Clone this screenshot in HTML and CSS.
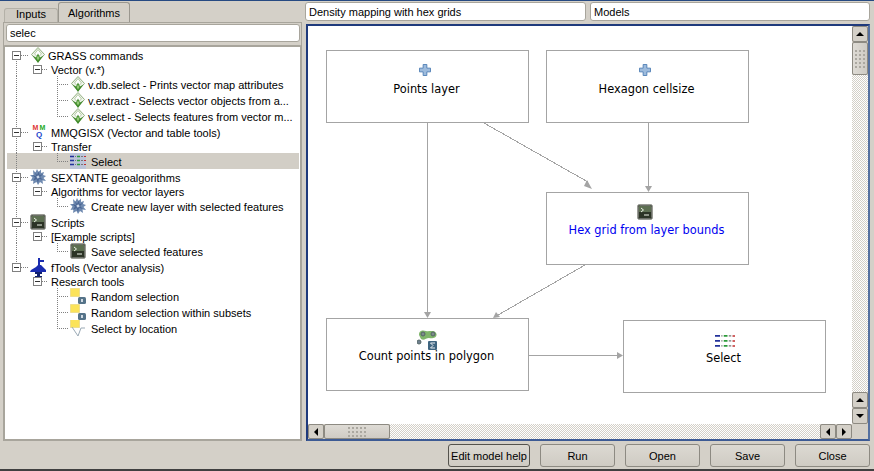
FILE: index.html
```html
<!DOCTYPE html>
<html lang="en">
<head>
  <meta charset="UTF-8" />
  <title>Processing modeler</title>
  <link rel="stylesheet" href="styles.css">
</head>
<body>
  <svg class="sprite" width="0" height="0">
    <symbol id="i-grass" viewBox="0 0 16 16">
      <path d="M8 .5 14.500 7.500 8 14.500 1.500 7.500Z" fill="#f0f5ec" stroke="#93b081"/>
      <path d="M8 2.500 11.500 7 8 10 4.500 7Z" fill="#fff" stroke="#b6cca6"/>
      <path d="M2.500 8.500 8 16 13.500 8.500 10 10.500 8 6.500 6 10.500Z" fill="#3f8a2a"/>
      <path d="M6.500 11 8 8.500 9.500 11 8 13.500Z" fill="#96cc78"/>
    </symbol>
    <symbol id="i-sextante" viewBox="0 0 16 16">
      <path d="M3 1 5.500 3.500 7 0 8.500 3 11 .5 11 4 14 3 13 6 16 7 13.500 9 16 12 12.500 11.500 13 15 10 13 8 16 6.500 13 3 15 3.500 11.500 .5 12 2.500 8.500 0 6 3.500 6Z" fill="#6f8ab0"/>
      <path d="M5 3 7 6 9 2 9.500 6 13 5 10 8 13 11 9 10 8 14 6.500 10 3 12 5 8.500 2 6 6 7Z" fill="#4a6694"/>
      <path d="M6.500 7 9 6.500 9.500 9 7 9.500Z" fill="#c9d6e8"/>
    </symbol>
    <symbol id="i-term" viewBox="0 0 16 16">
      <rect x=".5" y=".5" width="15" height="15" rx="2" fill="#2c3426" stroke="#9a9c95"/>
      <rect x="1.500" y="1.500" width="13" height="13" rx="1" fill="none" stroke="#6c6f68"/>
      <rect x="2" y="2" width="12" height="6" fill="#5d6f52"/>
      <path d="M4 4 6.500 6 4 8" fill="none" stroke="#eef3e8"/>
      <path d="M7 11H12" stroke="#eef3e8"/>
    </symbol>
    <symbol id="i-ftools" viewBox="0 0 16 19">
      <path d="M8 0H10V2H14V4H10V7H11L16 12V14H0L1 12 6 9 8 7Z" fill="#1a2cb0"/>
      <path d="M5 14H12V16H10V18H12V19H5V18H7V16H5Z" fill="#10206f"/>
    </symbol>
    <symbol id="i-random" viewBox="0 0 16 16">
      <rect x=".5" y=".5" width="9" height="8" fill="#fbe35a" stroke="#e0cd70" stroke-dasharray="1 1"/>
      <rect x="8" y="9" width="8" height="7" rx="1.500" fill="#557389"/>
      <rect x="11" y="11" width="2" height="3" fill="#cfd9e2"/>
    </symbol>
    <symbol id="i-location" viewBox="0 0 16 16">
      <rect x=".5" y="-.5" width="9" height="8" fill="#fbe35a" stroke="#e0cd70" stroke-dasharray="1 1"/>
      <path d="M2 7 8 16 11 8H15" fill="none" stroke="#9aa9b5"/>
    </symbol>
    <symbol id="i-select" viewBox="0 0 16 12">
      <path d="M0 1.500H4M0 5.500H4M0 9.500H4" stroke="#23329b" stroke-width="1.500"/>
      <path d="M7 1.500H10M7 5.500H10M7 9.500H10" stroke="#2c9a3a" stroke-width="1.500"/>
      <path d="M5 1.500H6M5 5.500H6M5 9.500H6M11 1.500H13M11 5.500H13M11 9.500H13" stroke="#777"/>
      <path d="M14 1.500H16M14 5.500H16M14 9.500H16" stroke="#c03030" stroke-width="1.200"/>
    </symbol>
    <symbol id="i-plus" viewBox="0 0 13 13">
      <path d="M4.500 .5H8.500V4.500H12.500V8.500H8.500V12.500H4.500V8.500H.5V4.500H4.500Z" fill="#9dbbdc" stroke="#4f7fb5"/>
    </symbol>
    <symbol id="i-count" viewBox="0 0 20 20">
      <path d="M2 5C2 0 6 0 9 1 12 2 18 -1 19.500 4 20 8 15 9 12 8 9 8 7 11 4 9Z" fill="#7fb56a"/>
      <circle cx="6" cy="4" r="2" fill="#7d8c8c" stroke="#566"/>
      <circle cx="16" cy="4" r="2" fill="#7d8c8c" stroke="#566"/>
      <circle cx="2" cy="12" r="2" fill="#6f8090" stroke="#566"/>
      <rect x="11" y="11" width="9" height="9" rx="1" fill="#3f6580"/>
      <path d="M18 13H13.500L16 15.500 13.500 18H18" fill="none" stroke="#e8eef2"/>
    </symbol>
  </svg>

  <div class="window">
    <div class="sidebar">
      <div class="tabs">
        <div class="tab">Inputs</div>
        <div class="tab active">Algorithms</div>
      </div>
      <div class="tab-page">
        <input class="field search" type="text" value="selec" />
        <div class="tree">
          <div class="row trunk-down"><i class="box"></i><i class="stub"></i><svg class="ic"><use href="#i-grass"/></svg><span class="t">GRASS commands</span></div>
          <div class="row short trunk"><i class="box sub"></i><i class="stub small"></i><span class="t">Vector (v.*)</span></div>
          <div class="row trunk"><i class="tick"></i><svg class="ic"><use href="#i-grass"/></svg><span class="t">v.db.select - Prints vector map attributes</span></div>
          <div class="row trunk"><i class="tick"></i><svg class="ic"><use href="#i-grass"/></svg><span class="t">v.extract - Selects vector objects from a...</span></div>
          <div class="row trunk"><i class="tick last"></i><svg class="ic"><use href="#i-grass"/></svg><span class="t">v.select - Selects features from vector m...</span></div>
          <div class="row trunk"><i class="box"></i><i class="stub"></i><span class="ic mmq"><b class="m1">M</b><b class="m2">M</b><b class="q">Q</b></span><span class="t wide">MMQGISX (Vector and table tools)</span></div>
          <div class="row short trunk"><i class="box sub"></i><i class="stub small"></i><span class="t">Transfer</span></div>
          <div class="row trunk selected"><i class="tick last"></i><svg class="ic ic-picked"><use href="#i-select"/></svg><span class="t wide">Select</span></div>
          <div class="row trunk"><i class="box"></i><i class="stub"></i><svg class="ic"><use href="#i-sextante"/></svg><span class="t wide">SEXTANTE geoalgorithms</span></div>
          <div class="row short trunk"><i class="box sub"></i><i class="stub small"></i><span class="t">Algorithms for vector layers</span></div>
          <div class="row trunk"><i class="tick last"></i><svg class="ic"><use href="#i-sextante"/></svg><span class="t wide">Create new layer with selected features</span></div>
          <div class="row trunk"><i class="box"></i><i class="stub"></i><svg class="ic"><use href="#i-term"/></svg><span class="t wide">Scripts</span></div>
          <div class="row short trunk"><i class="box sub"></i><i class="stub small"></i><span class="t">[Example scripts]</span></div>
          <div class="row trunk"><i class="tick last"></i><svg class="ic"><use href="#i-term"/></svg><span class="t wide">Save selected features</span></div>
          <div class="row trunk-up"><i class="box"></i><i class="stub"></i><svg class="ic ic-ftools"><use href="#i-ftools"/></svg><span class="t wide">fTools (Vector analysis)</span></div>
          <div class="row short"><i class="box sub"></i><i class="stub small"></i><span class="t">Research tools</span></div>
          <div class="row"><i class="tick"></i><svg class="ic"><use href="#i-random"/></svg><span class="t wide">Random selection</span></div>
          <div class="row"><i class="tick"></i><svg class="ic"><use href="#i-random"/></svg><span class="t wide">Random selection within subsets</span></div>
          <div class="row"><i class="tick last"></i><svg class="ic"><use href="#i-location"/></svg><span class="t wide">Select by location</span></div>
        </div>
      </div>
    </div>

    <div class="main">
      <div class="names">
        <input class="field name" type="text" value="Density mapping with hex grids" />
        <input class="field group" type="text" value="Models" />
      </div>
      <div class="view">
        <div class="canvas">
          <svg class="wires" width="544" height="398">
            <g stroke="#a4a4a4" fill="none" shape-rendering="crispEdges">
              <path d="M119.500 97V288"/>
              <path d="M176 97 280 156"/>
              <path d="M340.500 97V162"/>
              <path d="M277 239 190 289"/>
              <path d="M220 329.500H310"/>
            </g>
            <g fill="#a4a4a4">
              <path d="M116 286H123L119.500 292Z"/>
              <path d="M284 163 276 160 279 154Z"/>
              <path d="M337 160H344L340.500 166Z"/>
              <path d="M185 292 188 286 192 291Z"/>
              <path d="M315 329.500 309 326V333Z"/>
            </g>
          </svg>
          <div class="node n-points"><svg class="nic plus"><use href="#i-plus"/></svg><span>Points layer</span></div>
          <div class="node n-hex"><svg class="nic plus"><use href="#i-plus"/></svg><span>Hexagon cellsize</span></div>
          <div class="node n-grid script"><svg class="nic"><use href="#i-term"/></svg><span>Hex grid from layer bounds</span></div>
          <div class="node n-count"><svg class="nic big"><use href="#i-count"/></svg><span>Count points in polygon</span></div>
          <div class="node n-select"><svg class="nic sel"><use href="#i-select"/></svg><span>Select</span></div>
        </div>
        <div class="sb-v">
          <div class="arrow"><i class="up"></i></div>
          <div class="thumb grip"></div>
          <div class="track"></div>
          <div class="arrow"><i class="up"></i></div>
          <div class="arrow"><i class="down"></i></div>
        </div>
        <div class="sb-h">
          <div class="arrow"><i class="left"></i></div>
          <div class="thumb grip"></div>
          <div class="track"></div>
          <div class="arrow"><i class="left"></i></div>
          <div class="arrow"><i class="right"></i></div>
        </div>
      </div>
    </div>

    <div class="buttons">
      <button class="btn help">Edit model help</button>
      <button class="btn">Run</button>
      <button class="btn">Open</button>
      <button class="btn">Save</button>
      <button class="btn">Close</button>
    </div>
  </div>
</body>
</html>
```

FILE: styles.css
```css
* {
  box-sizing: border-box;
}
html, body {
  margin: 0;
  height: 100%;
  overflow: hidden;
}
body {
  font-family: "Liberation Sans", Arial, sans-serif;
  font-size: 11px;
  color: #000;
  background: #d4d0c8;
}
.sprite {
  position: absolute;
}
.window {
  width: 874px;
  height: 471px;
  display: grid;
  grid-template-columns: 303px 1fr;
  grid-template-rows: 1fr 28px;
  border-top: 1px solid #264a82;
  border-bottom: 2px solid #404040;
  padding-left: 1px;
}

/* left panel */
.sidebar {
  padding: 1px 0 0 2px;
  display: flex;
  flex-direction: column;
  min-height: 0;
}
.tabs {
  display: flex;
  align-items: flex-end;
  height: 20px;
  padding-left: 1px;
}
.tab {
  height: 14px;
  width: 54px;
  text-align: center;
  line-height: 11px;
  border: 1px solid #b4b1a8;
  border-bottom: 0;
  border-radius: 3px 3px 0 0;
  background: #cfcbc3;
}
.tab.active {
  height: 20px;
  width: 72px;
  line-height: 20px;
  background: #d4d0c8;
  border-color: #9a978f;
}
.tab-page {
  flex: 1;
  min-height: 0;
  border: 1px solid #a8a59c;
  padding: 1px 0 0 2px;
  display: flex;
  flex-direction: column;
  width: 299px;
}
.field {
  display: block;
  height: 18px;
  border: 1px solid #a8a59c;
  border-radius: 3px;
  background: #fff;
  padding: 0 3px;
  font: 11px "Liberation Sans", Arial, sans-serif;
  color: #000;
  outline: 0;
}
.search {
  width: 294px;
  flex: none;
}
.tree {
  flex: 1;
  margin: 3px -1px -1px -3px;
  padding: 0 1px 0 2px;
  background: #fff;
  border: 2px solid #a8a59c;
  border-radius: 2px;
  overflow: hidden;
}
.row {
  display: flex;
  align-items: center;
  height: 16px;
  white-space: nowrap;
  --dots: repeating-linear-gradient(#808080 0 1px, transparent 1px 2px);
  background-repeat: no-repeat;
}
.row.short {
  height: 13px;
}
.trunk {
  background-image: var(--dots);
  background-size: 1px 100%;
  background-position: 9px 0;
}
.trunk-down {
  background-image: var(--dots);
  background-size: 1px 50%;
  background-position: 9px 100%;
}
.trunk-up {
  background-image: var(--dots);
  background-size: 1px 50%;
  background-position: 9px 0;
}
.selected {
  background-color: #d2cec6;
}
.box {
  flex: none;
  width: 9px;
  height: 9px;
  margin-left: 5px;
  border: 1px solid #808080;
  background: linear-gradient(#333, #333) center / 5px 1px no-repeat #fff;
}
.box.sub {
  margin-left: 26px;
}
.stub {
  flex: none;
  width: 7px;
  height: 1px;
  margin-right: 2px;
  background: repeating-linear-gradient(90deg, #808080 0 1px, transparent 1px 2px);
}
.stub.small {
  width: 5px;
}
.tick {
  flex: none;
  align-self: stretch;
  width: 11px;
  margin-left: 50px;
  margin-right: 2px;
  background:
    repeating-linear-gradient(#808080 0 1px, transparent 1px 2px) 0 0 / 1px 100% no-repeat,
    repeating-linear-gradient(90deg, #808080 0 1px, transparent 1px 2px) 0 50% / 100% 1px no-repeat;
}
.tick.last {
  background:
    repeating-linear-gradient(#808080 0 1px, transparent 1px 2px) 0 0 / 1px 50% no-repeat,
    repeating-linear-gradient(90deg, #808080 0 1px, transparent 1px 2px) 0 50% / 100% 1px no-repeat;
}
.ic {
  flex: none;
  width: 16px;
  height: 16px;
  overflow: visible;
}
.ic-ftools {
  height: 19px;
}
.ic-picked {
  background: #bcc4d8;
}
.t {
  margin-left: 2px;
  margin-top: 2px;
}
.short .t {
  margin-top: 0;
}
.t.wide {
  margin-left: 5px;
}
.mmq {
  display: grid;
  grid-template-columns: 7px 7px;
  grid-template-rows: 7px 7px;
  justify-items: center;
  font-size: 7px;
  line-height: 7px;
  padding-left: 2px;
}
.m1 { color: #d33; }
.m2 { color: #2a2; }
.q {
  color: #24c;
  grid-column: 1 / 3;
  font-size: 8px;
}

/* right panel */
.main {
  display: flex;
  flex-direction: column;
  min-height: 0;
  padding: 1px 4px 0 1px;
}
.names {
  display: flex;
  gap: 4px;
  height: 19px;
}
.name {
  width: 281px;
  height: 19px;
}
.group {
  flex: 1;
  min-width: 0;
  height: 19px;
}
.view {
  flex: 1;
  min-height: 0;
  margin: 3px 0 0 1px;
  border: 2px solid #1f3a7c;
  border-right-color: #5570a0;
  border-bottom-color: #3c5a94;
  background: #d4d0c8;
  display: grid;
  grid-template-columns: 1fr 16px;
  grid-template-rows: 1fr 15px;
}
.canvas {
  position: relative;
  background: #fff;
  overflow: hidden;
  min-width: 0;
}
.wires {
  position: absolute;
  left: 0;
  top: 0;
}
.node {
  position: absolute;
  width: 203px;
  height: 73px;
  padding-right: 2px;
  background: #fff;
  border: 1px solid #a4a4a4;
  display: flex;
  flex-direction: column;
  align-items: center;
  font-family: "DejaVu Sans", sans-serif;
  font-size: 11.4px;
  line-height: 14px;
}
.node.script {
  color: #0000f0;
}
.nic {
  width: 16px;
  height: 16px;
  margin: 11px 3px 3px 0;
  flex: none;
}
.nic.plus {
  width: 12px;
  height: 12px;
  margin: 13px 3px 6px 0;
}
.nic.big {
  width: 20px;
  height: 20px;
  margin: 11px 0 -1px;
}
.nic.sel {
  width: 20px;
  height: 15px;
  margin: 13px 0 2px 2px;
}
.n-points { left: 18px; top: 24px; }
.n-hex { left: 238px; top: 24px; }
.n-grid { left: 238px; top: 166px; }
.n-count { left: 18px; top: 292px; }
.n-select { left: 315px; top: 294px; }

.sb-v, .sb-h {
  display: flex;
  background: #d4d0c8;
}
.sb-v {
  flex-direction: column;
}
.arrow {
  flex: none;
  width: 16px;
  height: 16px;
  border: 1px solid #8d8a82;
  border-radius: 2px;
  background: #d4d0c8;
  display: flex;
  align-items: center;
  justify-content: center;
}
.sb-h .arrow {
  height: 15px;
}
.thumb {
  flex: none;
  border: 1px solid #8d8a82;
  border-radius: 2px;
  background: linear-gradient(90deg, #dedbd5, #cfcbc4);
  display: flex;
  align-items: center;
  justify-content: center;
}
.grip::after {
  content: "";
  background-image: radial-gradient(#aaa79f 0.7px, transparent 1px);
  background-size: 4px 4px;
}
.sb-v .thumb {
  height: 33px;
}
.sb-v .grip::after {
  width: 12px;
  height: 20px;
}
.sb-h .thumb {
  width: 66px;
  background: linear-gradient(#dedbd5, #cfcbc4);
}
.sb-h .grip::after {
  width: 20px;
  height: 12px;
}
.track {
  flex: 1;
  background: repeating-conic-gradient(#d4d0c8 0 25%, #fff 0 50%) 0 0 / 2px 2px;
}
.up, .down, .left, .right {
  display: block;
  width: 0;
  height: 0;
  border: 4px solid transparent;
}
.up {
  border-bottom: 4px solid #000;
  border-top: 0;
}
.down {
  border-top: 4px solid #000;
  border-bottom: 0;
}
.left {
  border-right: 4px solid #000;
  border-left: 0;
}
.right {
  border-left: 4px solid #000;
  border-right: 0;
}

/* bottom buttons */
.buttons {
  grid-column: 1 / 3;
  display: flex;
  justify-content: flex-end;
  align-items: flex-start;
  gap: 10px;
  padding: 3px 4px 0 0;
}
.btn {
  width: 75px;
  height: 23px;
  border: 1px solid #8d8a82;
  border-radius: 3px;
  background: linear-gradient(#dcd9d2, #cfcbc3);
  font: 11px "Liberation Sans", Arial, sans-serif;
  color: #000;
  padding: 0;
}
.btn.help {
  width: 82px;
  border-color: #55534d;
}
```
